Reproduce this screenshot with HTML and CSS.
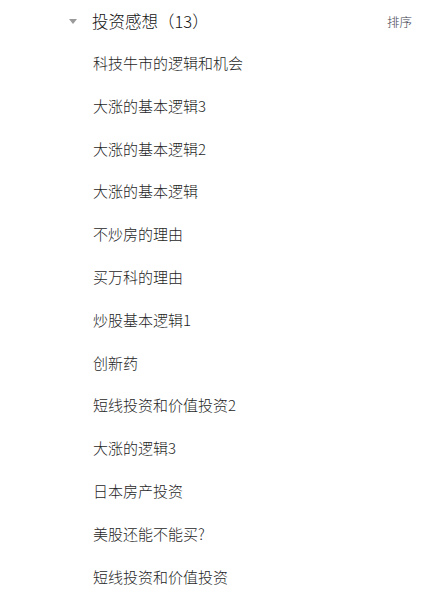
FILE: index.html
```html
<!DOCTYPE html>
<html lang="zh">
<head>
<meta charset="utf-8">
<link rel="stylesheet" href="styles.css">
</head>
<body>
<div class="panel">
  <div class="header">
    <span class="caret"></span>
    <span class="title">投资感想（13）</span>
    <span class="sort">排序</span>
  </div>
  <ul class="list">
    <li>科技牛市的逻辑和机会</li>
    <li>大涨的基本逻辑3</li>
    <li>大涨的基本逻辑2</li>
    <li>大涨的基本逻辑</li>
    <li>不炒房的理由</li>
    <li>买万科的理由</li>
    <li>炒股基本逻辑1</li>
    <li>创新药</li>
    <li>短线投资和价值投资2</li>
    <li>大涨的逻辑3</li>
    <li>日本房产投资</li>
    <li>美股还能不能买?</li>
    <li>短线投资和价值投资</li>
  </ul>
</div>
</body>
</html>
```
FILE: styles.css
```css
html, body {
  margin: 0;
  padding: 0;
  background: #fff;
}
body {
  font-family: "Noto Sans CJK SC", "Noto Sans", sans-serif;
  color: #333;
}
.panel {
  width: 429px;
}
.header {
  display: flex;
  align-items: center;
  height: 42px;
  padding: 0 17px 0 69px;
}
.caret {
  width: 0;
  height: 0;
  border-left: 4.5px solid transparent;
  border-right: 4.5px solid transparent;
  border-top: 5px solid #9a9a9a;
  margin-right: 15px;
}
.title {
  font-size: 16.5px;
  font-weight: 300;
  color: #111;
  flex: 1;
}
.sort {
  font-size: 12.5px;
  font-weight: 300;
  color: #3c4150;
}
.list {
  list-style: none;
  margin: 0;
  padding: 0 0 0 93px;
}
.list li {
  height: 42.8px;
  line-height: 42.8px;
  font-size: 15px;
  font-weight: 300;
  color: #1e1e1e;
}
```
